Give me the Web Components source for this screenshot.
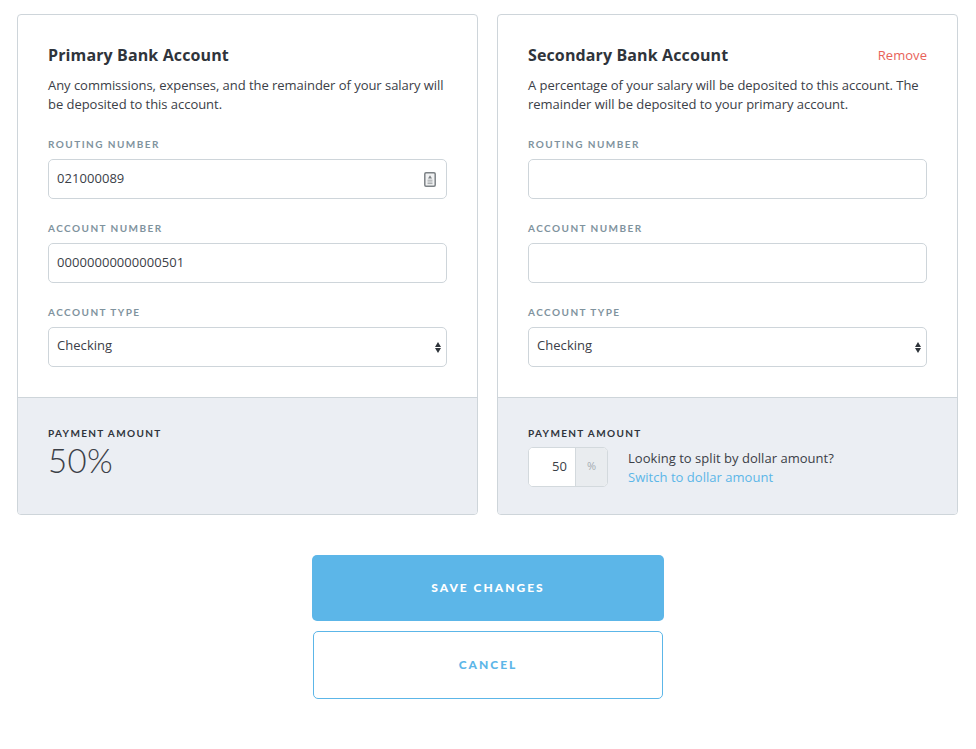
<!DOCTYPE html>
<html>
<head>
<meta charset="utf-8">
<title>Bank Accounts</title>
<style>
  html, body { margin: 0; background: #fff; }
  body { font-family: "Open Sans", "Liberation Sans", sans-serif; color: #33383f; }
  .accounts { display: flex; gap: 19px; padding: 14px 18px 0 17px; }
  .actions { display: flex; flex-direction: column; align-items: center; margin-top: 40px; }
</style>
</head>
<body>
<template id="account-card-tpl">
  <style>
    :host { display: flex; flex-direction: column; width: 461px; height: 501px; box-sizing: border-box; border: 1px solid #ced5da; border-radius: 4px; overflow: hidden; background: #fff; }
    .top { height: 383px; box-sizing: border-box; padding: 28px 30px 0; border-bottom: 1px solid #ced5da; }
    .head { display: flex; justify-content: space-between; align-items: center; height: 24px; }
    .title { font: 700 16px/24px "Open Sans", sans-serif; letter-spacing: .12px; color: #2f343b; }
    .desc { font: 400 13px/19px "Open Sans", sans-serif; letter-spacing: -.04px; color: #3b4047; margin-top: 9px; height: 38px; }
    .fields { display: flex; flex-direction: column; gap: 22px; margin-top: 23px; }
    .bottom { flex: 1; background: #ebeef3; padding: 28px 30px 0; }
    ::slotted([slot=action]) { font: 400 13px/24px "Open Sans", sans-serif; color: #e8625a; letter-spacing: .05px; }
  </style>
  <div class="top">
    <div class="head"><div class="title"><slot name="title"></slot></div><slot name="action"></slot></div>
    <div class="desc"><slot name="desc"></slot></div>
    <div class="fields"><slot></slot></div>
  </div>
  <div class="bottom"><slot name="payment"></slot></div>
</template>

<template id="form-field-tpl">
  <style>
    :host { display: block; }
    .label { font: 700 10px/14px Lato, sans-serif; letter-spacing: 1.45px; color: #7f939e; margin-bottom: 8px; text-transform: uppercase; }
    .box { display: flex; align-items: center; justify-content: space-between; height: 40px; box-sizing: border-box; border: 1px solid #ced5da; border-radius: 5px; padding: 0 8px; font: 400 13px/20px "Open Sans", sans-serif; letter-spacing: .05px; color: #3b4047; background: #fff; }
    .value { display: block; margin-bottom: 2px; }
    :host([select]) .value { margin-bottom: 4px; }
    ::slotted(svg) { display: block; }
  </style>
  <div class="label"></div>
  <div class="box"><span class="value"><slot></slot></span><slot name="icon"></slot></div>
</template>

<template id="payment-amount-tpl">
  <style>
    :host { display: block; }
    .label { font: 700 10px/14px Lato, sans-serif; letter-spacing: 1.35px; color: #2f343b; }
  </style>
  <div class="label">PAYMENT AMOUNT</div>
  <slot></slot>
</template>

<template id="percent-input-tpl">
  <style>
    :host { display: flex; width: 80px; height: 40px; box-sizing: border-box; border: 1px solid #d3d9dd; border-radius: 5px; overflow: hidden; background: #fff; flex: none; }
    .val { width: 47px; box-sizing: border-box; text-align: right; padding-right: 8px; font: 400 13px/36px "Open Sans", sans-serif; letter-spacing: .1px; color: #3b4047; background: #fff; border-right: 1px solid #d3d9dd; }
    .unit { flex: 1; text-align: center; font: 400 11px/36px "Open Sans", sans-serif; color: #a5adb3; background: #e9ecef; }
  </style>
  <div class="val"><slot></slot></div><div class="unit">%</div>
</template>

<template id="action-button-tpl">
  <style>
    :host { display: flex; align-items: center; justify-content: center; box-sizing: border-box; border-radius: 5px; font: 900 12px/14px Lato, sans-serif; letter-spacing: 2px; width: 352px; height: 66px; background: #5cb6e8; color: #fff; }
    :host([outline]) { width: 350px; height: 68px; margin-top: 10px; background: #fff; color: #5cb6e8; border: 1px solid #5cb6e8; }
  </style>
  <slot></slot>
</template>

<div class="accounts">
  <account-card>
    <span slot="title">Primary Bank Account</span>
    <span slot="desc">Any commissions, expenses, and the remainder of your salary will be deposited to this account.</span>
    <form-field label="Routing number">021000089<svg slot="icon" width="12" height="15" viewBox="0 0 12 15" style="margin-right:2px"><rect x=".8" y=".8" width="10.4" height="13.4" rx="1.2" fill="#f1f2f3" stroke="#7d8286" stroke-width="1.5"/><path d="M6 3.2 8 6.6H4z" fill="#7d8286"/><path d="M3.5 8.2h5M3.5 10h5M3.5 11.6h5" stroke="#a4a8ab" stroke-width="1"/></svg></form-field>
    <form-field label="Account number">00000000000000501</form-field>
    <form-field label="Account type" select>Checking<svg slot="icon" width="6" height="11" viewBox="0 0 6 11" style="margin-right:-3px"><path d="M3 0 6 5H0zM3 11 0 6h6z" fill="#2f343b"/></svg></form-field>
    <payment-amount slot="payment"><div style="font:300 33px/38px Lato,sans-serif;letter-spacing:.3px;color:#3b4047;margin-top:1px">50%</div></payment-amount>
  </account-card>
  <account-card>
    <span slot="title">Secondary Bank Account</span>
    <span slot="action">Remove</span>
    <span slot="desc">A percentage of your salary will be deposited to this account. The remainder will be deposited to your primary account.</span>
    <form-field label="Routing number"></form-field>
    <form-field label="Account number"></form-field>
    <form-field label="Account type" select>Checking<svg slot="icon" width="6" height="11" viewBox="0 0 6 11" style="margin-right:-3px"><path d="M3 0 6 5H0zM3 11 0 6h6z" fill="#2f343b"/></svg></form-field>
    <payment-amount slot="payment">
      <div style="display:flex;gap:20px;margin-top:7px">
        <percent-input>50</percent-input>
        <div style="font:400 13px/19px 'Open Sans',sans-serif;letter-spacing:.03px;color:#3b4047;padding-top:2px">Looking to split by dollar amount?<br><span style="color:#5cb6e8">Switch to dollar amount</span></div>
      </div>
    </payment-amount>
  </account-card>
</div>
<div class="actions">
  <action-button>SAVE CHANGES</action-button>
  <action-button outline>CANCEL</action-button>
</div>
<script>
  function fromTemplate(el, id) {
    el.attachShadow({ mode: 'open' });
    el.shadowRoot.appendChild(document.getElementById(id).content.cloneNode(true));
  }

  class AccountCard extends HTMLElement {
    constructor() { super(); fromTemplate(this, 'account-card-tpl'); }
  }
  class FormField extends HTMLElement {
    constructor() { super(); fromTemplate(this, 'form-field-tpl'); }
    connectedCallback() {
      this.shadowRoot.querySelector('.label').textContent = this.getAttribute('label');
    }
  }
  class PaymentAmount extends HTMLElement {
    constructor() { super(); fromTemplate(this, 'payment-amount-tpl'); }
  }
  class PercentInput extends HTMLElement {
    constructor() { super(); fromTemplate(this, 'percent-input-tpl'); }
  }
  class ActionButton extends HTMLElement {
    constructor() { super(); fromTemplate(this, 'action-button-tpl'); }
  }

  customElements.define('account-card', AccountCard);
  customElements.define('form-field', FormField);
  customElements.define('payment-amount', PaymentAmount);
  customElements.define('percent-input', PercentInput);
  customElements.define('action-button', ActionButton);
</script>
</body>
</html>
